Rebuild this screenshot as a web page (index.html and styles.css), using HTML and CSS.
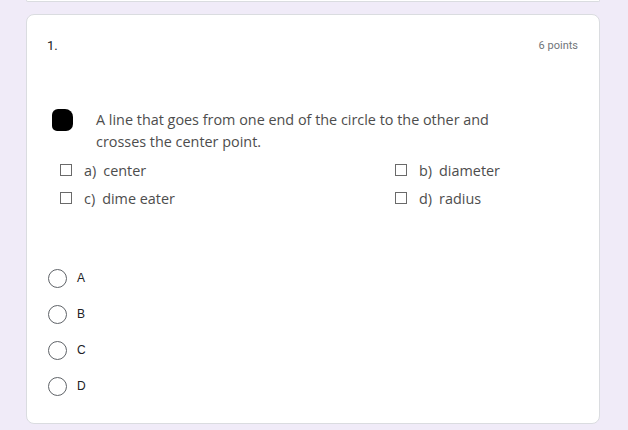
FILE: index.html
```html
<!DOCTYPE html>
<html>
<head>
<meta charset="utf-8">
<link rel="stylesheet" href="styles.css">
</head>
<body>
<div class="page">
  <div class="prev-card"></div>
  <div class="card">
    <div class="header">
      <span class="qnum">1.</span>
      <span class="points">6 points</span>
    </div>
    <div class="question">
      <div class="blob"></div>
      <div class="qtext">A line that goes from one end of the circle to the other and crosses the center point.</div>
    </div>
    <div class="options">
      <div class="opt"><span class="box"></span><span class="lbl">a)</span><span>center</span></div>
      <div class="opt"><span class="box"></span><span class="lbl">b)</span><span>diameter</span></div>
      <div class="opt"><span class="box"></span><span class="lbl">c)</span><span>dime eater</span></div>
      <div class="opt"><span class="box"></span><span class="lbl">d)</span><span>radius</span></div>
    </div>
    <div class="radios">
      <div class="radio"><span class="circle"></span><span class="rlabel">A</span></div>
      <div class="radio"><span class="circle"></span><span class="rlabel">B</span></div>
      <div class="radio"><span class="circle"></span><span class="rlabel">C</span></div>
      <div class="radio"><span class="circle"></span><span class="rlabel">D</span></div>
    </div>
  </div>
</div>
</body>
</html>
```

FILE: styles.css
```css
html, body {
  margin: 0;
  padding: 0;
  background: #f0ebf8;
  font-family: Roboto, "Liberation Sans", Arial, sans-serif;
}
.page {
  width: 574px;
  margin-left: 26px;
  display: flex;
  flex-direction: column;
  gap: 12px;
}
.prev-card {
  height: 1px;
  background: #fff;
  border: 1px solid #dadce0;
  border-top: none;
  border-radius: 0 0 8px 8px;
}
.card {
  background: #fff;
  border: 1px solid #dadce0;
  border-radius: 8px;
  padding: 20px 21px 0 20px;
  box-sizing: border-box;
  height: 410px;
}
.header {
  display: flex;
  justify-content: space-between;
  align-items: center;
  height: 20px;
}
.qnum {
  font-size: 13px;
  color: #202124;
}
.points {
  font-size: 11px;
  color: #70757a;
}
.question {
  margin-top: 54px;
  display: flex;
  align-items: flex-start;
  padding-left: 5px;
}
.blob {
  width: 21px;
  height: 22px;
  background: #000;
  border-radius: 6px 8px 7px 5px;
  flex: none;
}
.qtext {
  margin-left: 23px;
  width: 410px;
  font-family: "Open Sans", sans-serif;
  font-size: 14.4px;
  line-height: 22px;
  color: #4d4d4d;
}
.options {
  margin-top: 3px;
  padding-left: 13px;
  display: grid;
  grid-template-columns: 335px 1fr;
}
.opt {
  height: 28px;
  display: flex;
  align-items: center;
  font-family: "Open Sans", sans-serif;
  font-size: 14.4px;
  color: #4d4d4d;
}
.box {
  width: 10px;
  height: 10px;
  border: 1px solid #6a6a6a;
  margin-right: 12px;
  flex: none;
}
.lbl {
  margin-right: 7px;
}
.radios {
  margin-top: 48px;
  padding-left: 1px;
  display: flex;
  flex-direction: column;
}
.radio {
  height: 36px;
  display: flex;
  align-items: center;
}
.circle {
  width: 17px;
  height: 17px;
  border: 1px solid #5f6368;
  border-radius: 50%;
  flex: none;
}
.rlabel {
  margin-left: 10px;
  font-family: "Liberation Sans", Arial, sans-serif;
  font-size: 12px;
  color: #202124;
}
```
